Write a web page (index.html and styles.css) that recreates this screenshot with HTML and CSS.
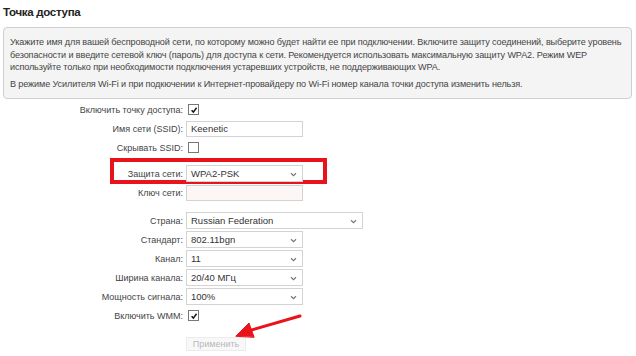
FILE: index.html
```html
<!DOCTYPE html>
<html lang="ru">
<head>
  <meta charset="UTF-8" />
  <title>Точка доступа</title>
  <link rel="stylesheet" href="styles.css">
</head>
<body>
  <h2 class="page-title">Точка доступа</h2>

  <div class="hint-box">
    <p>Укажите имя для вашей беспроводной сети, по которому можно будет найти ее при подключении. Включите защиту соединений, выберите уровень безопасности и введите сетевой ключ (пароль) для доступа к сети. Рекомендуется использовать максимальную защиту WPA2. Режим WEP используйте только при необходимости подключения устаревших устройств, не поддерживающих WPA.</p>
    <p>В режиме Усилителя Wi-Fi и при подкючении к Интернет-провайдеру по Wi-Fi номер канала точки доступа изменить нельзя.</p>
  </div>

  <div class="form">
    <div class="row">
      <label>Включить точку доступа:</label>
      <span class="check checked"><svg viewBox="0 0 10 10"><path d="M2 5.2 L4.2 7.6 L8.2 2.2" /></svg></span>
    </div>
    <div class="row">
      <label>Имя сети (SSID):</label>
      <span class="field">Keenetic</span>
    </div>
    <div class="row">
      <label>Скрывать SSID:</label>
      <span class="check"></span>
    </div>
    <div class="row row-marked">
      <label>Защита сети:</label>
      <span class="field select">WPA2-PSK<svg class="chev" viewBox="0 0 8 6"><path d="M1 1.5 L4 4.5 L7 1.5" /></svg></span>
    </div>
    <div class="row">
      <label>Ключ сети:</label>
      <span class="field key"></span>
    </div>

    <div class="row spaced">
      <label>Страна:</label>
      <span class="field select wide">Russian Federation<svg class="chev" viewBox="0 0 8 6"><path d="M1 1.5 L4 4.5 L7 1.5" /></svg></span>
    </div>
    <div class="row">
      <label>Стандарт:</label>
      <span class="field select">802.11bgn<svg class="chev" viewBox="0 0 8 6"><path d="M1 1.5 L4 4.5 L7 1.5" /></svg></span>
    </div>
    <div class="row">
      <label>Канал:</label>
      <span class="field select">11<svg class="chev" viewBox="0 0 8 6"><path d="M1 1.5 L4 4.5 L7 1.5" /></svg></span>
    </div>
    <div class="row">
      <label>Ширина канала:</label>
      <span class="field select">20/40 МГц<svg class="chev" viewBox="0 0 8 6"><path d="M1 1.5 L4 4.5 L7 1.5" /></svg></span>
    </div>
    <div class="row">
      <label>Мощность сигнала:</label>
      <span class="field select">100%<svg class="chev" viewBox="0 0 8 6"><path d="M1 1.5 L4 4.5 L7 1.5" /></svg></span>
    </div>
    <div class="row">
      <label>Включить WMM:</label>
      <span class="check checked"><svg viewBox="0 0 10 10"><path d="M2 5.2 L4.2 7.6 L8.2 2.2" /></svg></span>
    </div>

    <div class="row actions">
      <span></span>
      <button class="apply-btn" disabled>Применить</button>
      <svg class="arrow" viewBox="0 0 70 28">
        <path d="M66 5 L14 20" />
        <path class="head" d="M2 25 L15 12 L20 26 Z" />
      </svg>
    </div>
  </div>
</body>
</html>
```

FILE: styles.css
```css
body {
  margin: 0;
  font-family: 'Liberation Sans', Arial, sans-serif;
  background: #fff;
  color: #333;
}

.page-title {
  margin: 0;
  padding: 5px 3px 0;
  font-size: 11.5px;
  font-weight: bold;
  letter-spacing: -0.3px;
  line-height: 15px;
  color: #222;
}

.hint-box {
  margin: 7px 4px 0 3px;
  padding: 8px 6px 4px;
  background: #f4f4f4;
  border: 1px solid #cfcfcf;
  border-radius: 4px;
  font-size: 9.1px;
  letter-spacing: -0.12px;
  line-height: 12.5px;
  color: #444;
}

.hint-box p {
  margin: 0 0 4px;
}

.form {
  margin-top: 2px;
  display: flex;
  flex-direction: column;
  gap: 2px;
}

.row {
  position: relative;
  display: grid;
  grid-template-columns: 183px auto;
  column-gap: 3px;
  align-items: center;
  min-height: 17px;
  font-size: 9px;
  color: #444;
}

.row label {
  text-align: right;
}

.row.row-marked {
  margin-top: 7px;
}

.row.spaced {
  margin-top: 9px;
}

.check {
  width: 9px;
  height: 9px;
  margin-left: 2px;
  border: 1px solid #777;
  background: #fff;
  display: flex;
  align-items: center;
  justify-content: center;
}

.check svg {
  display: none;
  width: 8px;
  height: 8px;
}

.check.checked svg {
  display: block;
}

.check svg path {
  fill: none;
  stroke: #111;
  stroke-width: 1.8;
}

.field {
  position: relative;
  box-sizing: border-box;
  width: 117px;
  height: 16px;
  padding: 0 4px;
  border: 1px solid #d3d3d3;
  background: #fff;
  line-height: 14px;
  font-size: 9.5px;
  color: #333;
}

.field.key {
  background: #fdf6f6;
}

.field.select {
  height: 17px;
  line-height: 15px;
}

.field.wide {
  width: 177px;
}

.chev {
  position: absolute;
  right: 5px;
  top: 6px;
  width: 7px;
  height: 5px;
}

.chev path {
  fill: none;
  stroke: #777;
  stroke-width: 1.4;
}

.row-marked::before {
  content: "";
  position: absolute;
  left: 110px;
  top: -7px;
  width: 209px;
  height: 18px;
  border: 4px solid #e8131b;
}

.actions {
  margin-top: 9px;
}

.apply-btn {
  justify-self: start;
  width: 60px;
  height: 14px;
  padding: 0;
  border: 1px solid #ececec;
  background: #f8f8f8;
  font-family: 'Liberation Sans', Arial, sans-serif;
  font-size: 9px;
  line-height: 12px;
  color: #b8b8b8;
}

.arrow {
  position: absolute;
  left: 234px;
  top: -24px;
  width: 70px;
  height: 28px;
}

.arrow path {
  stroke: #e8131b;
  stroke-width: 3;
  stroke-linecap: round;
  fill: none;
}

.arrow path.head {
  fill: #e8131b;
  stroke-width: 1;
  stroke-linejoin: round;
}
```
